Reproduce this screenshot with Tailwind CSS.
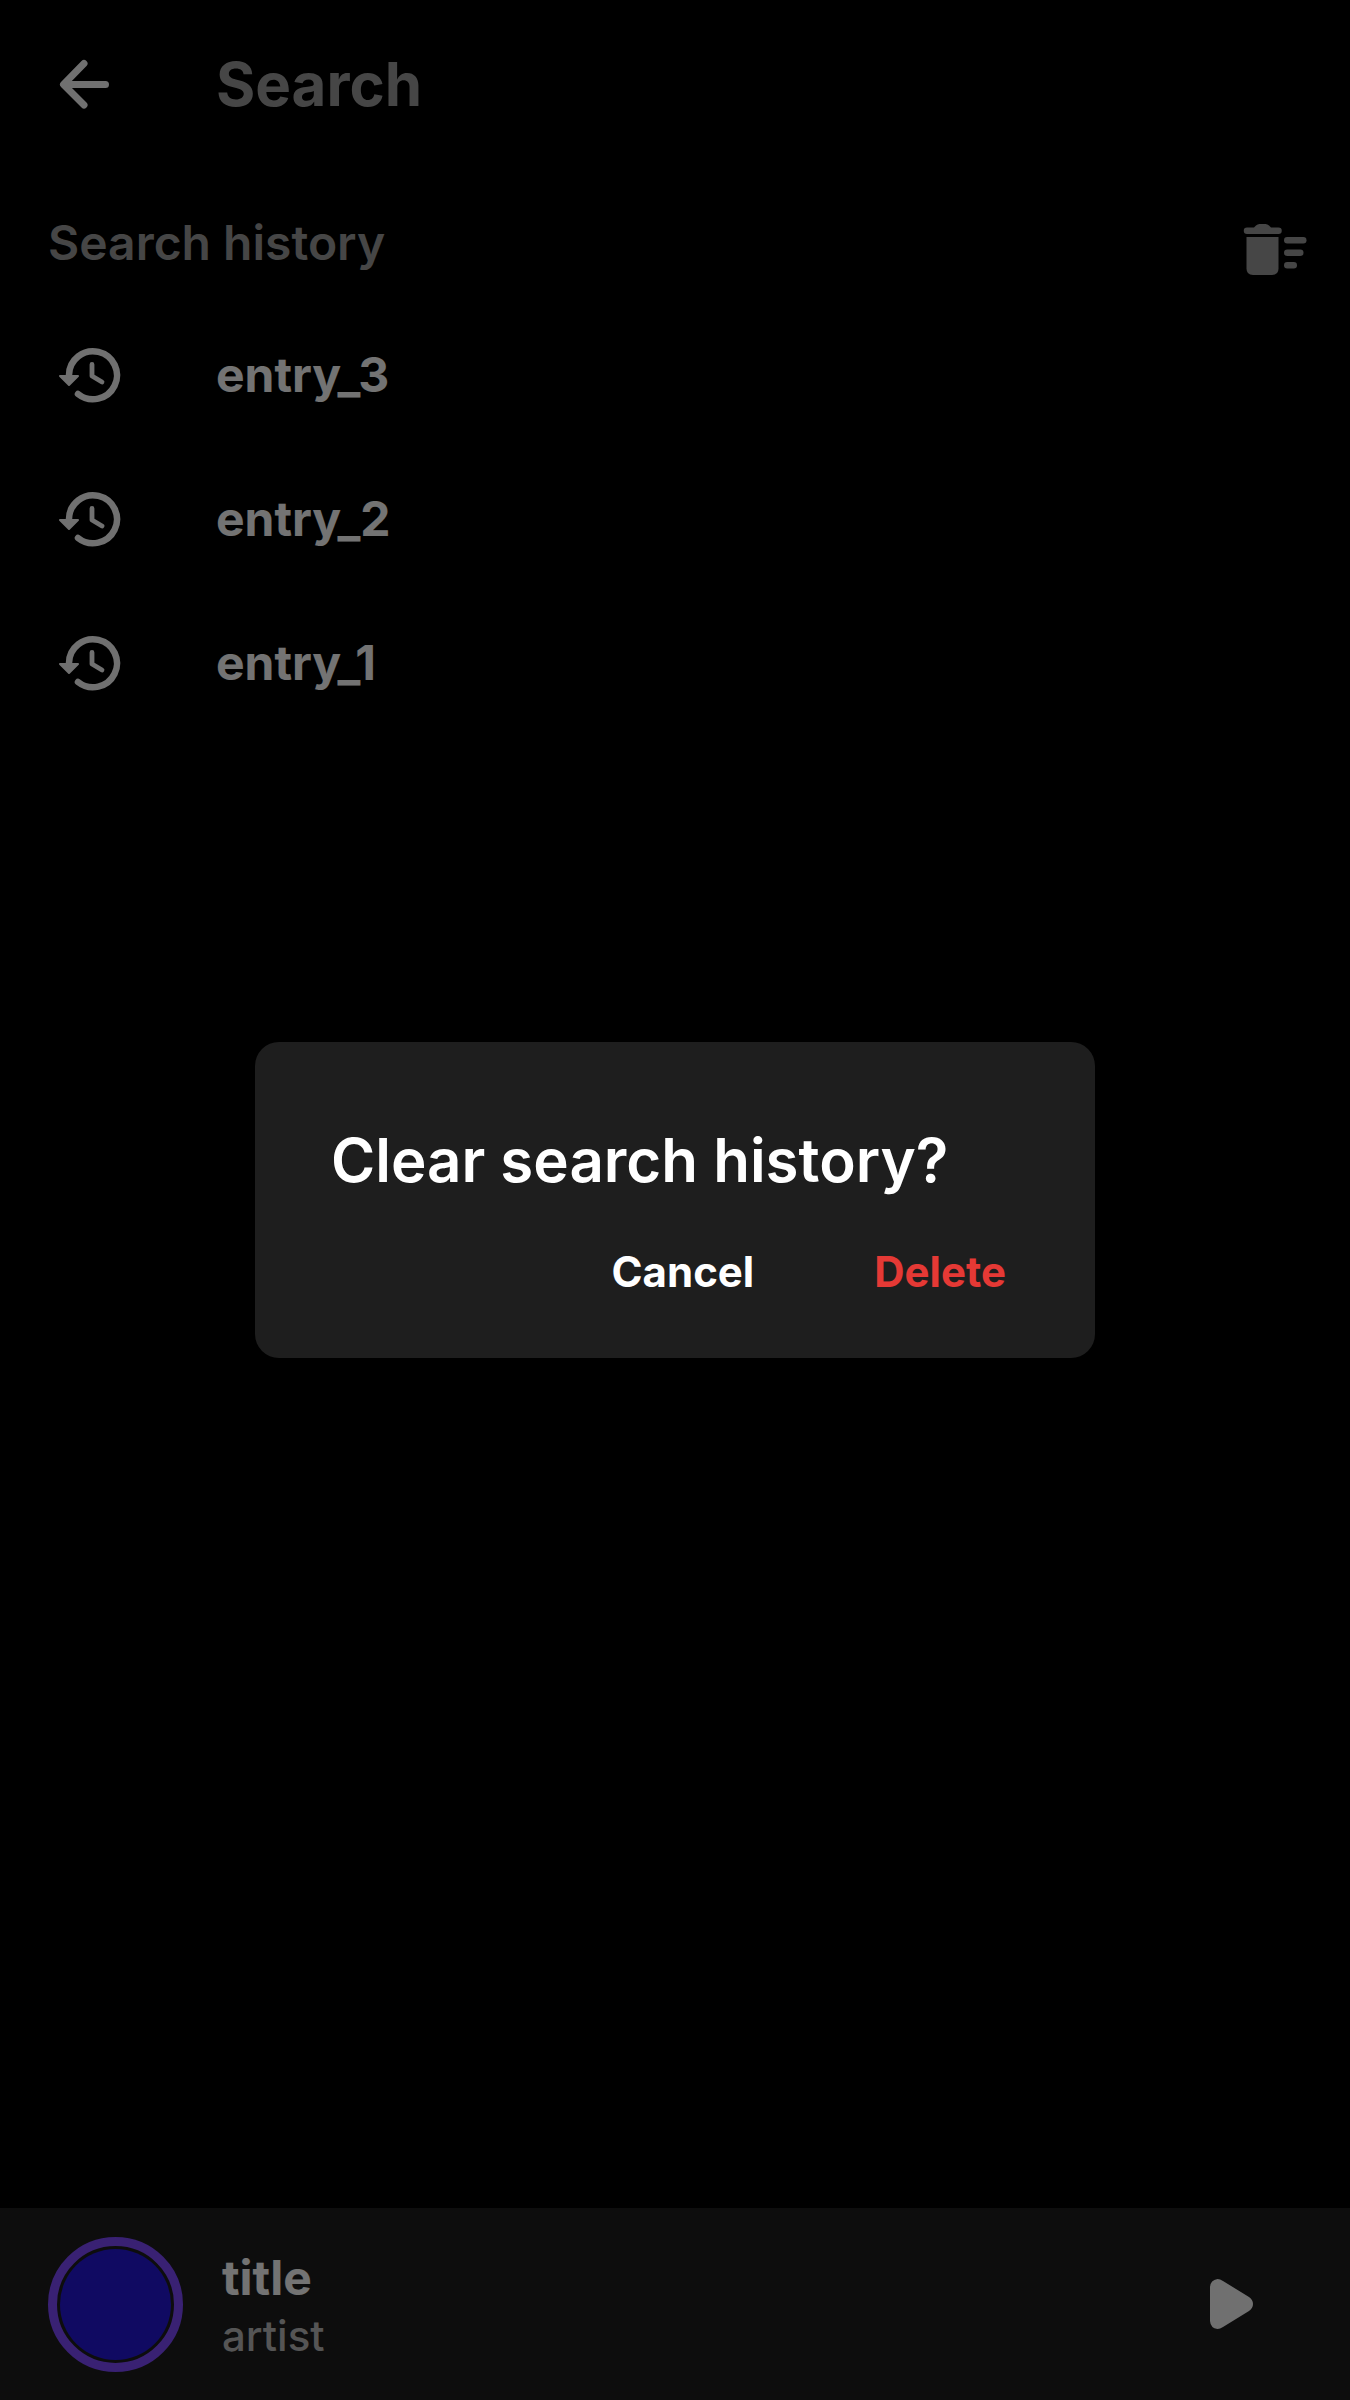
<!DOCTYPE html>
<html lang="en">
<head>
<meta charset="utf-8">
<meta name="viewport" content="width=device-width, initial-scale=1">
<title>Search</title>
<script src="https://cdn.jsdelivr.net/npm/@tailwindcss/browser@4"></script>
</head>
<body class="bg-black font-['Inter',sans-serif] text-[#e6e6e6]">
<svg class="hidden" aria-hidden="true">
  <symbol id="history" viewBox="0 0 72 72" fill="none" stroke="currentColor" stroke-linecap="round">
    <path d="M15 36A24 24 0 1 1 24 55" stroke-width="6.500"/>
    <path d="M38 25.500v11.500l10 6" stroke-width="4.800" stroke-linejoin="round"/>
    <path d="M6 37h18l-9 9z" fill="currentColor" stroke-width="2" stroke-linejoin="round"/>
  </symbol>
</svg>
<div class="flex min-h-screen flex-col">
  <header class="flex h-[168px] items-center gap-24 px-12">
    <button type="button" aria-label="Back" class="size-[72px] shrink-0 text-[#e0e0e0]">
      <svg viewBox="0 0 72 72" class="size-full" fill="none" stroke="currentColor" stroke-width="7" stroke-linecap="round" stroke-linejoin="round"><path d="M57.500 36.500H17M36 15.500L15.500 36.500L36 57"/></svg>
    </button>
    <h1 class="text-[60px] leading-[72px] font-bold text-[#8c8c8c]">Search</h1>
  </header>
  <main class="grow">
    <div class="flex h-[135px] items-start justify-between pt-[45px] pr-10 pl-12 text-[#8c8c8c]">
      <h2 class="text-[48px] leading-[60px] font-semibold">Search history</h2>
      <button type="button" aria-label="Clear search history" class="size-[72px]">
        <svg viewBox="0 0 72 72" class="size-full" fill="currentColor">
          <path d="M9 14.500h7l2-2q1.500-1.500 3.500-1.500h6q2 0 3.500 1.500l2 2H40.500a3.250 3.250 0 0 1 0 6.500H9a3.250 3.250 0 0 1 0-6.500z"/>
          <path d="M8.500 24h32v31.500q0 6.500-6.500 6.500H15q-6.500 0-6.500-6.500z"/>
          <rect x="46" y="24" width="22.500" height="6.500" rx="3.250"/>
          <rect x="46" y="36.500" width="19.500" height="6.500" rx="3.250"/>
          <rect x="46" y="49" width="13" height="6.500" rx="3.250"/>
        </svg>
      </button>
    </div>
    <ul class="text-[48px] leading-[60px] font-bold">
      <li><a href="#" class="flex h-36 items-center gap-[90px] px-[54px]"><svg class="size-[72px] text-[#e0e0e0]"><use href="#history"/></svg>entry_3</a></li>
      <li><a href="#" class="flex h-36 items-center gap-[90px] px-[54px]"><svg class="size-[72px] text-[#e0e0e0]"><use href="#history"/></svg>entry_2</a></li>
      <li><a href="#" class="flex h-36 items-center gap-[90px] px-[54px]"><svg class="size-[72px] text-[#e0e0e0]"><use href="#history"/></svg>entry_1</a></li>
    </ul>
  </main>
  <footer class="flex h-48 items-center bg-[#1b1b1b] pr-[72px] pl-12">
    <div class="size-[135px] shrink-0 rounded-full border-9 border-[#7242e6] p-[3px]"><div class="size-full rounded-full bg-[#2014c4]"></div></div>
    <div class="grow pt-1 pl-[39px]">
      <p class="text-[48px] leading-[60px] font-bold">title</p>
      <p class="text-[42px] leading-[56px] font-medium text-[#aaaaaa]">artist</p>
    </div>
    <button type="button" aria-label="Play" class="flex size-24 items-center justify-center text-[#e0e0e0]">
      <svg viewBox="0 0 72 72" class="size-[72px]" fill="currentColor"><path d="M16 19Q16.500 12 23.500 11Q26 11 29 13L55 29Q59 32 59 36T55 43L29 59Q26 61 23.500 61Q16.500 60 16 53z"/></svg>
    </button>
  </footer>
</div>
<div class="fixed inset-0 flex items-center justify-center bg-black/50 px-12">
  <section role="dialog" aria-modal="true" aria-labelledby="dialog-title" class="w-full max-w-[840px] rounded-3xl bg-[#1e1e1e] pt-[82px] pb-[38px] text-white">
    <h2 id="dialog-title" class="px-[76px] text-[60px] leading-[72px] font-semibold">Clear search history?</h2>
    <div class="flex justify-end gap-12 pt-7 pr-[53px] text-[42px] leading-[48px] font-bold">
      <button type="button" class="h-24 px-9">Cancel</button>
      <button type="button" class="h-24 px-9 text-[#e53935]">Delete</button>
    </div>
  </section>
</div>
</body>
</html>
